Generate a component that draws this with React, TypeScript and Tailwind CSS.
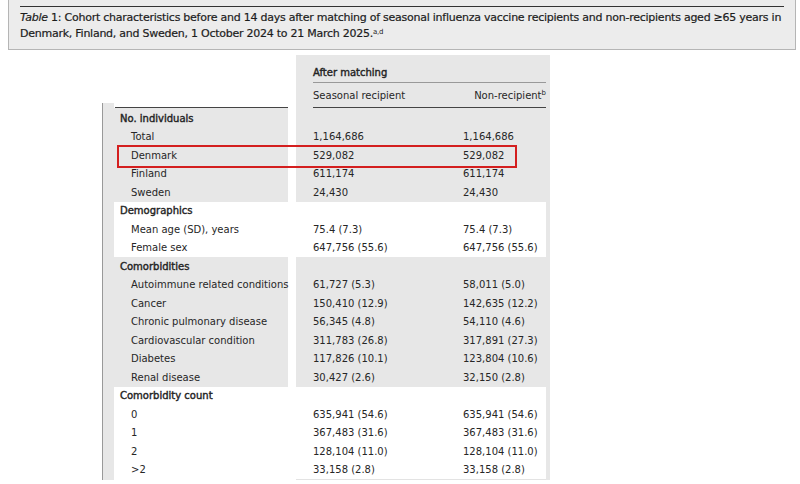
import React from 'react';

type Row = { label: string; a: string; b: string };
type Section = { title: string; gray: boolean; rows: Row[] };

const sections: Section[] = [
  {
    title: 'No. individuals',
    gray: true,
    rows: [
      { label: 'Total', a: '1,164,686', b: '1,164,686' },
      { label: 'Denmark', a: '529,082', b: '529,082' },
      { label: 'Finland', a: '611,174', b: '611,174' },
      { label: 'Sweden', a: '24,430', b: '24,430' },
    ],
  },
  {
    title: 'Demographics',
    gray: false,
    rows: [
      { label: 'Mean age (SD), years', a: '75.4 (7.3)', b: '75.4 (7.3)' },
      { label: 'Female sex', a: '647,756 (55.6)', b: '647,756 (55.6)' },
    ],
  },
  {
    title: 'Comorbidities',
    gray: true,
    rows: [
      { label: 'Autoimmune related conditions', a: '61,727 (5.3)', b: '58,011 (5.0)' },
      { label: 'Cancer', a: '150,410 (12.9)', b: '142,635 (12.2)' },
      { label: 'Chronic pulmonary disease', a: '56,345 (4.8)', b: '54,110 (4.6)' },
      { label: 'Cardiovascular condition', a: '311,783 (26.8)', b: '317,891 (27.3)' },
      { label: 'Diabetes', a: '117,826 (10.1)', b: '123,804 (10.6)' },
      { label: 'Renal disease', a: '30,427 (2.6)', b: '32,150 (2.8)' },
    ],
  },
  {
    title: 'Comorbidity count',
    gray: false,
    rows: [
      { label: '0', a: '635,941 (54.6)', b: '635,941 (54.6)' },
      { label: '1', a: '367,483 (31.6)', b: '367,483 (31.6)' },
      { label: '2', a: '128,104 (11.0)', b: '128,104 (11.0)' },
      { label: '>2', a: '33,158 (2.8)', b: '33,158 (2.8)' },
    ],
  },
];

// Lucida-like demibold: thicken the regular face instead of using the wider bold
const demi = '[-webkit-text-stroke:0.4px_#222]';

export default function App() {
  return (
    <div className="w-[800px] h-[484px] bg-white text-[#262626] overflow-hidden" style={{ fontFamily: '"DejaVu Sans", "Open Sans", sans-serif' }}>
      {/* caption */}
      <div className="ml-[8px] w-[788px] h-[50px] bg-[#ececec] border-l border-r border-b border-[#b5b5b5] pt-[6px]">
        <div className="mx-[11px] border-t border-[#333] pt-[3px] text-[11px] leading-[16px] tracking-[-0.25px] text-[#1c1c1c] whitespace-nowrap [-webkit-text-stroke:0.2px_#1c1c1c]">
          <i>Table</i> 1: Cohort characteristics before and 14 days after matching of seasonal influenza vaccine recipients and non-recipients aged ≥65 years in
          <br />
          Denmark, Finland, and Sweden, 1 October 2024 to 21 March 2025.<sup className="text-[7px] [-webkit-text-stroke:0px]">a,d</sup>
        </div>
      </div>

      <div className="relative flex ml-[102px] gap-[8px] text-[10px]">
        {/* left: labels */}
        <div className="mt-[53px] flex">
          <div className="w-[12px] bg-[#e7e7e7] border-l border-[#999]" />
          <div className="w-[174px]">
            <div className="h-[4px]" />
            <div className="ml-px border-t border-[#444]" />
            {sections.map((s, i) => (
              <div key={s.title} className={`${s.gray ? 'bg-[#e7e7e7]' : 'bg-white'} ${i === 0 ? 'pt-[1px]' : ''}`}>
                <div className={`h-[18.5px] flex items-center pl-[6px] ${demi}`}>{s.title}</div>
                {s.rows.map((r) => (
                  <div key={r.label} className="h-[18.5px] flex items-center pl-[17px] whitespace-nowrap">{r.label}</div>
                ))}
              </div>
            ))}
          </div>
        </div>

        {/* right: header + values */}
        <div className="mt-[5px] w-[254px]">
          <div className="bg-[#e7e7e7] pl-[17px] pr-[4px]">
            <div className={`h-[28px] pt-[9px] border-b border-[#999] leading-[18px] ${demi}`}>After matching</div>
            <div className="h-[25px] flex items-center justify-between border-b border-[#444]">
              <span>Seasonal recipient</span>
              <span>Non-recipient<sup className="text-[7px]">b</sup></span>
            </div>
          </div>
          {sections.map((s, i) => (
            <div key={s.title} className="flex">
              <div className={`w-[250px] pl-[17px] ${s.gray ? 'bg-[#e7e7e7]' : 'bg-white'} ${i === 0 ? 'pt-[1px]' : ''} ${i === sections.length - 1 ? 'border-b border-[#e3e3e3]' : ''}`}>
                <div className="h-[18.5px]" />
                {s.rows.map((r) => (
                  <div key={r.label} className="h-[18.5px] flex items-center whitespace-nowrap">
                    <span className="w-[150px]">{r.a}</span>
                    <span>{r.b}</span>
                  </div>
                ))}
              </div>
              <div className="w-[4px] bg-[#e7e7e7]" />
            </div>
          ))}
        </div>

        {/* highlight */}
        <div className="absolute left-[15px] top-[95px] w-[400px] h-[23px] border-2 border-[#d41f1f]" />
      </div>
    </div>
  );
}
